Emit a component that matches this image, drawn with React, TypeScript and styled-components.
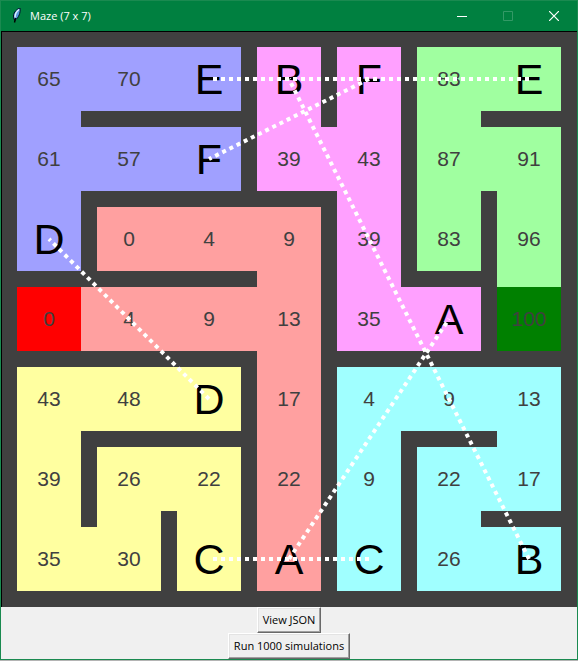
import React from 'react';
import styled, { createGlobalStyle } from 'styled-components';

const WALL = '#404040';

const GlobalStyle = createGlobalStyle`
  *, *::before, *::after { box-sizing: border-box; }
  body { margin: 0; background: #b4b4b4; }
`;

const Window = styled.main`
  display: flex;
  flex-direction: column;
  border: 1px solid #1a8a50;
  background: #f0f0f0;
  font-family: 'Open Sans', 'Noto Sans', sans-serif;
`;

const TitleBar = styled.header`
  display: flex;
  align-items: center;
  height: 30px;
  padding-left: 7px;
  background: #008040;
  color: #fff;
`;

const Title = styled.h1`
  flex: 1;
  margin: 0 0 0 6px;
  font-size: 11px;
  line-height: 16px;
  font-weight: 400;
`;

const WindowButton = styled.button`
  display: flex;
  align-items: center;
  justify-content: center;
  width: 46px;
  height: 30px;
  padding: 0;
  border: 0;
  background: transparent;
  color: #fff;

  &:disabled { color: #339966; }
`;

const Canvas = styled.section`
  padding: 15px 16px 16px 15px;
  border-top: 1px solid #000;
  border-left: 1px solid #000;
  background: ${WALL};
`;

const Maze = styled.div`
  position: relative;
  display: grid;
  grid-template-columns: repeat(6, minmax(0, 4fr) minmax(0, 1fr)) minmax(0, 4fr);
  grid-template-rows: repeat(6, minmax(0, 4fr) minmax(0, 1fr)) minmax(0, 4fr);
  aspect-ratio: 1;
`;

const Tile = styled.div<{ $row: number; $col: number; $fill: string }>`
  grid-row: ${(p) => p.$row};
  grid-column: ${(p) => p.$col};
  display: flex;
  align-items: center;
  justify-content: center;
  background: ${(p) => p.$fill};
  font-family: 'Liberation Sans', Arial, sans-serif;
`;

const Score = styled.span`
  color: ${WALL};
  font-size: 21px;
  line-height: 24px;
`;

const Portal = styled.span`
  color: #000;
  font-size: 43px;
  line-height: 48px;
`;

const Links = styled.svg`
  position: absolute;
  inset: 0;
  width: 100%;
  height: 100%;
  pointer-events: none;
`;

const Actions = styled.footer`
  display: flex;
  flex-direction: column;
  align-items: center;
`;

const ActionButton = styled.button`
  height: 26px;
  padding: 0 5px 1px;
  border: 1px solid;
  border-color: #fff #696969 #696969 #fff;
  box-shadow: inset -1px -1px #a0a0a0, inset 1px 1px #e3e3e3;
  background: #f0f0f0;
  color: #000;
  font-family: inherit;
  font-size: 11px;
  line-height: 16px;
`;

const COLORS: Record<string, string> = {
  b: '#a0a0ff',
  p: '#ffa0ff',
  g: '#a0ffa0',
  s: '#ffa0a0',
  y: '#ffffa0',
  c: '#a0ffff',
};

const LABELS = [
  ['65', '70', 'E', 'B', 'F', '83', 'E'],
  ['61', '57', 'F', '39', '43', '87', '91'],
  ['D', '0', '4', '9', '39', '83', '96'],
  ['0', '4', '9', '13', '35', 'A', '100'],
  ['43', '48', 'D', '17', '4', '9', '13'],
  ['39', '26', '22', '22', '9', '22', '17'],
  ['35', '30', 'C', 'A', 'C', '26', 'B'],
];

const REGIONS = ['bbbppgg', 'bbbppgg', 'bssspgg', 'ssssppg', 'yyysccc', 'yyysccc', 'yyysccc'];

// 1 marks an open passage from the cell to its right or lower neighbour.
const OPEN_RIGHT = ['110001', '110101', '011000', '111010', '110011', '010001', '100001'];
const OPEN_DOWN = ['1001110', '1000111', '0001101', '0001000', '1001101', '1111110'];

const START = { row: 3, col: 0, fill: '#ff0000' };
const GOAL = { row: 3, col: 6, fill: '#008000' };

// Portal pairs as [row, col] to [row, col].
const LINKS = [
  [0, 6, 0, 2],
  [6, 6, 0, 3],
  [0, 4, 1, 2],
  [4, 2, 2, 0],
  [6, 3, 3, 5],
  [6, 4, 6, 2],
];

const center = (index: number) => 32 + index * 80;

function cellFill(row: number, col: number) {
  const special = [START, GOAL].find((s) => s.row === row && s.col === col);
  return special ? special.fill : COLORS[REGIONS[row][col]];
}

function MazeCell({ row, col }: { row: number; col: number }) {
  const label = LABELS[row][col];
  const region = COLORS[REGIONS[row][col]];
  const gridRow = row * 2 + 1;
  const gridCol = col * 2 + 1;
  return (
    <>
      <Tile $row={gridRow} $col={gridCol} $fill={cellFill(row, col)}>
        {/[A-Z]/.test(label) ? <Portal>{label}</Portal> : <Score>{label}</Score>}
      </Tile>
      {OPEN_RIGHT[row][col] === '1' && <Tile $row={gridRow} $col={gridCol + 1} $fill={region} />}
      {OPEN_DOWN[row]?.[col] === '1' && <Tile $row={gridRow + 1} $col={gridCol} $fill={region} />}
    </>
  );
}

function Feather() {
  return (
    <svg width="16" height="16" viewBox="0 0 16 16" aria-hidden="true">
      <path d="M12 0C9 1 5.5 4 5.5 8L6 11.5L7.5 12C10.5 9.5 12.8 5 12 0Z" fill="#5b9be0" stroke="#001028" />
      <path d="M11 1.5C8.5 3.5 7 6 7 9.5" fill="none" stroke="#e4f2ff" strokeWidth="1.4" />
      <path d="M7.5 10L6.5 14.5" fill="none" stroke="#000" strokeWidth="1.4" />
    </svg>
  );
}

export default function App() {
  return (
    <Window>
      <GlobalStyle />
      <TitleBar>
        <Feather />
        <Title>Maze (7 x 7)</Title>
        <WindowButton aria-label="Minimize">
          <svg width="10" height="10" viewBox="0 0 10 10"><path d="M0 5.5H10" stroke="currentColor" /></svg>
        </WindowButton>
        <WindowButton aria-label="Maximize" disabled>
          <svg width="10" height="10" viewBox="0 0 10 10"><path d="M0.5 0.5H9.5V9.5H0.5Z" fill="none" stroke="currentColor" /></svg>
        </WindowButton>
        <WindowButton aria-label="Close">
          <svg width="10" height="10" viewBox="0 0 10 10"><path d="M0 0L10 10M10 0L0 10" stroke="currentColor" strokeWidth="1.2" /></svg>
        </WindowButton>
      </TitleBar>
      <Canvas>
        <Maze>
          {LABELS.map((cells, row) => cells.map((_, col) => <MazeCell key={`${row}-${col}`} row={row} col={col} />))}
          <Links viewBox="0 0 544 544" aria-hidden="true">
            {LINKS.map(([r1, c1, r2, c2]) => (
              <line
                key={`${r1}${c1}${r2}${c2}`}
                x1={center(c1)}
                y1={center(r1)}
                x2={center(c2)}
                y2={center(r2)}
                stroke="#fff"
                strokeWidth="4"
                strokeDasharray="4 4"
              />
            ))}
          </Links>
        </Maze>
      </Canvas>
      <Actions>
        <ActionButton>View JSON</ActionButton>
        <ActionButton>Run 1000 simulations</ActionButton>
      </Actions>
    </Window>
  );
}
